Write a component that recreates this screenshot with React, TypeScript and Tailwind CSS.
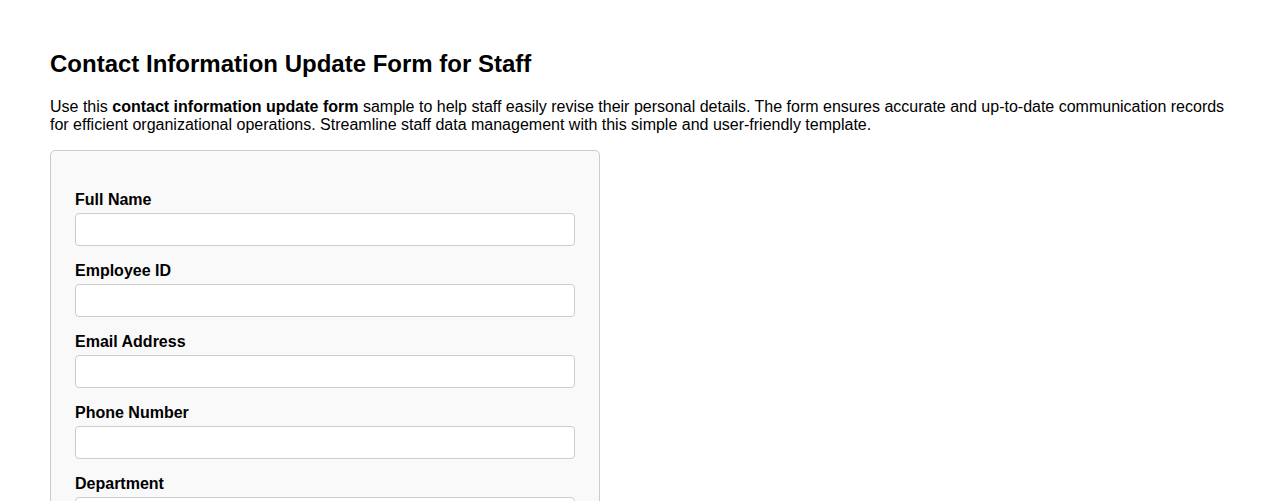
import React from "react";

const fields = ["Full Name", "Employee ID", "Email Address", "Phone Number", "Department"];

export default function App() {
  return (
    <div
      className="min-h-[501px] bg-white px-[50px] pt-[50px] text-black"
      style={{ fontFamily: '"Liberation Sans", Arial, sans-serif' }}
    >
      <h2 className="text-[24px] font-bold leading-[28px] m-0">
        Contact Information Update Form for Staff
      </h2>
      <p className="mt-[20px] text-[16px] leading-[18px]">
        Use this <strong className="font-bold">contact information update form</strong> sample to help staff
        easily revise their personal details. The form ensures accurate and up-to-date communication records
        for efficient organizational operations. Streamline staff data management with this simple and
        user-friendly template.
      </p>
      <form className="mt-[16px] w-[550px] rounded-[5px] border border-[#cccccc] bg-[#f9f9f9] px-[24px] pt-[40px] pb-[24px]">
        {fields.map((f) => (
          <div key={f}>
            <label className="block text-[16px] font-bold leading-[18px] mb-[4px]">{f}</label>
            <input
              type="text"
              className="block h-[33px] w-[500px] rounded-[4px] border border-[#cccccc] bg-white mb-[16px] px-2"
            />
          </div>
        ))}
      </form>
    </div>
  );
}
